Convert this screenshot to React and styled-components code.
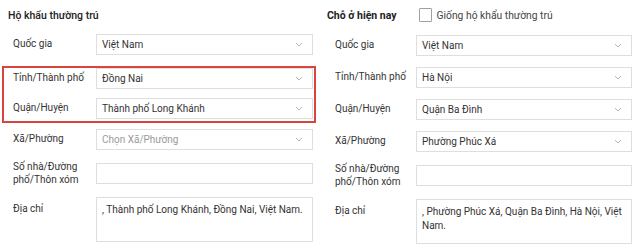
import styled, { createGlobalStyle } from "styled-components";

const GlobalStyle = createGlobalStyle`
  html, body {
    margin: 0;
    padding: 0;
    background: #ffffff;
  }
  body {
    font-family: Roboto, "Noto Sans", Arial, sans-serif;
    color: #333333;
  }
`;

const Chevron = () => (
  <svg width="8" height="5" viewBox="0 0 8 5" fill="none">
    <path d="M1 1l3 3 3-3" stroke="#b5b5b5" strokeWidth="1" />
  </svg>
);

const Field = ({ label, value, placeholder, top }) => (
  <Row $top={top}>
    <Label $top={top}>{label}</Label>
    {top ? (
      <TextArea>{value}</TextArea>
    ) : (
      <Select>
        <SelectText $muted={!value}>{value || placeholder}</SelectText>
        <Chevron />
      </Select>
    )}
  </Row>
);

const InputField = ({ label }) => (
  <Row>
    <Label>{label}</Label>
    <Input />
  </Row>
);

export default function App() {
  return (
    <>
      <GlobalStyle />
      <Page>
        <Column $pl={8} $pr={7} $indent={5} $label={83} $start={4}>
          <Heading>
            <Title>Hộ khẩu thường trú</Title>
          </Heading>
          <Fields>
            <Field label="Quốc gia" value="Việt Nam" />
            <Highlight>
              <Field label="Tỉnh/Thành phố" value="Đồng Nai" />
              <Field label="Quận/Huyện" value="Thành phố Long Khánh" />
            </Highlight>
            <Field label="Xã/Phường" placeholder="Chọn Xã/Phường" />
            <InputField label="Số nhà/Đường phố/Thôn xóm" />
            <Field
              label="Địa chỉ"
              top
              value=", Thành phố Long Khánh, Đồng Nai, Việt Nam."
            />
          </Fields>
        </Column>
        <Column $pl={7} $pr={8} $indent={8} $label={81} $start={5}>
          <Heading>
            <Title $bold>Chỗ ở hiện nay</Title>
            <CheckLabel>
              <CheckBox />
              Giống hộ khẩu thường trú
            </CheckLabel>
          </Heading>
          <Fields $gap={11}>
            <Field label="Quốc gia" value="Việt Nam" />
            <Field label="Tỉnh/Thành phố" value="Hà Nội" />
            <Field label="Quận/Huyện" value="Quận Ba Đình" />
            <Field label="Xã/Phường" value="Phường Phúc Xá" />
            <InputField label="Số nhà/Đường phố/Thôn xóm" />
            <Field
              label="Địa chỉ"
              top
              value=", Phường Phúc Xá, Quận Ba Đình, Hà Nội, Việt Nam."
            />
          </Fields>
        </Column>
      </Page>
    </>
  );
}

const Page = styled.div`
  display: grid;
  grid-template-columns: 320px 320px;
  width: 640px;
  height: 244px;
  overflow: hidden;
`;

const Column = styled.section`
  --indent: ${(p) => p.$indent}px;
  --label: ${(p) => p.$label}px;
  --start: ${(p) => p.$start}px;
  padding: 0 ${(p) => p.$pr}px 0 ${(p) => p.$pl}px;
`;

const Heading = styled.div`
  display: flex;
  align-items: center;
  height: 30px;
`;

const Title = styled.h3`
  margin: 0;
  font-size: 10.5px;
  font-weight: ${(p) => (p.$bold ? 700 : 500)};
  color: #222222;
`;

const CheckLabel = styled.label`
  display: flex;
  align-items: center;
  gap: 5px;
  margin-left: 22px;
  font-size: 10.3px;
  color: #444444;
`;

const CheckBox = styled.span`
  display: block;
  width: 13px;
  height: 14px;
  box-sizing: border-box;
  border: 1px solid #a0a0a0;
  border-radius: 1px;
  background: #ffffff;
`;

const Fields = styled.div`
  display: flex;
  flex-direction: column;
  gap: ${(p) => p.$gap || 11}px;
  margin-top: var(--start);
`;

const Highlight = styled.div`
  display: flex;
  flex-direction: column;
  gap: 9px;
  margin: 0 -3px -5px -6px;
  padding: 0 1px 2px 4px;
  border: 2px solid #d9443f;
`;

const Row = styled.div`
  display: flex;
  align-items: ${(p) => (p.$top ? "flex-start" : "center")};
  padding-left: var(--indent);
`;

const Label = styled.div`
  flex: 0 0 var(--label);
  padding-top: ${(p) => (p.$top ? "6px" : "0")};
  padding-right: 6px;
  box-sizing: border-box;
  font-size: 10px;
  line-height: 12.5px;
  color: #333333;
`;

const Box = styled.div`
  flex: 1;
  box-sizing: border-box;
  border: 1px solid #dedede;
  background: #ffffff;
`;

const Select = styled(Box)`
  display: flex;
  align-items: center;
  justify-content: space-between;
  height: 21px;
  padding: 0 9px 0 5px;
`;

const SelectText = styled.span`
  font-size: 10px;
  color: ${(p) => (p.$muted ? "#9a9a9a" : "#333333")};
`;

const Input = styled(Box)`
  height: 21px;
`;

const TextArea = styled(Box)`
  height: 45px;
  padding: 5px 4px 0 5px;
  font-size: 10px;
  line-height: 14px;
  color: #333333;
`;
